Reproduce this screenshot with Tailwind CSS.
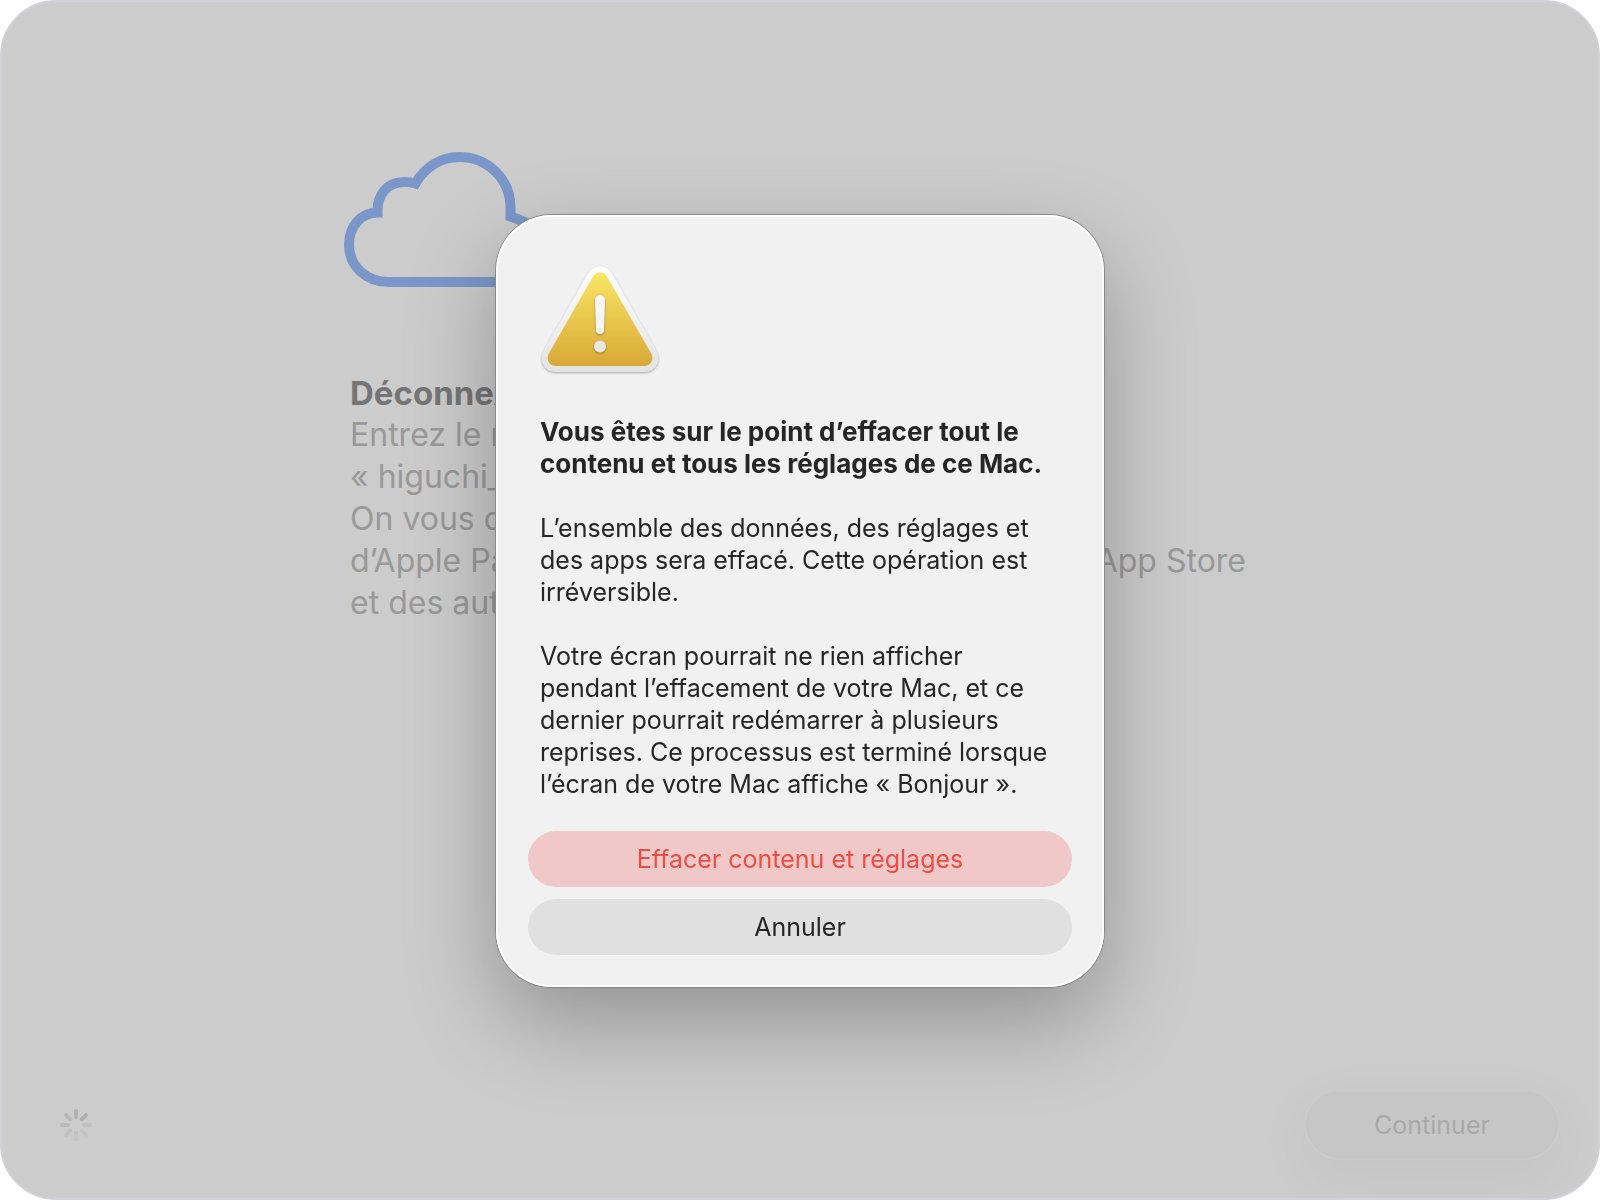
<!DOCTYPE html>
<html lang="fr">
<head>
    <meta charset="UTF-8">
    <meta name="viewport" content="width=device-width, initial-scale=1.0">
    <title>Assistant d’effacement</title>
    <script src="https://cdn.jsdelivr.net/npm/@tailwindcss/browser@4"></script>
</head>
<body class="bg-white font-['Inter',sans-serif]">
<div class="flex flex-col min-h-screen overflow-hidden rounded-[56px] border-2 border-[#d2d1d7] bg-[#cccccc]">
    <main class="grow w-full max-w-[900px] mx-auto pt-[148px]">
        <svg class="block w-[220px] h-[140px] -ml-2" viewBox="342 150 220 140" fill="none" stroke="#7b97ca"
             stroke-width="10">
            <path d="M520 282H389C366 282 349 266 349 244.500C349 226.500 361 212.500 377.500 212.500C377 194 388 182 404 182C409 182 412 182.500 415.500 183.500C425 167 441 157 459 157C488 157 510.500 179 510.500 208V216.500C530 223 549 232 549 249C549 268 536 282 520 282Z"/>
        </svg>
        <div class="pt-[82px] pr-1 text-[32px] leading-[42px] text-[#999999]">
            <h1 class="text-[33px] font-bold text-[#757575]">Déconnexion</h1>
            <p>Entrez le mot</p>
            <p>« higuchi_</p>
            <p>On vous de</p>
            <p class="flex justify-between"><span>d’Apple Pay</span><span>l’App Store</span></p>
            <p>et des autres</p>
        </div>
    </main>

    <footer class="flex items-center justify-between pl-[58px] pr-[38px] pb-[38px]">
        <svg class="w-8 h-8" viewBox="-16 -16 32 32" stroke-width="4" stroke-linecap="round">
            <path stroke="#b2b2b2" d="M0-8V-14"/>
            <path stroke="#b0b0b0" d="M5.700-5.700L9.900-9.900"/>
            <path stroke="#c0c0c0" d="M8 0H14"/>
            <path stroke="#c5c5c5" d="M5.700 5.700L9.900 9.900"/>
            <path stroke="#c2c2c2" d="M0 8V14"/>
            <path stroke="#bebebe" d="M-5.700 5.700L-9.900 9.900"/>
            <path stroke="#bababa" d="M-8 0H-14"/>
            <path stroke="#b7b7b7" d="M-5.700-5.700L-9.900-9.900"/>
        </svg>
        <button class="w-64 h-[71px] pt-0.5 rounded-full border-2 border-[#cbcbcb] bg-[#c6c6c6] text-[25px] text-[#a9a9a9] shadow-[0_16px_60px_rgb(0_0_0/0.05)]"
                disabled>Continuer
        </button>
    </footer>
</div>

<div class="fixed inset-0 flex items-center justify-center pt-0.5">
    <section role="alertdialog" aria-labelledby="alert-title"
             class="w-[608px] px-8 pt-[49px] pb-8 rounded-[56px] bg-[#f1f1f1] shadow-[0_0_0_1px_#8a8a8a,0_0_4px_rgb(0_0_0/0.1),0_36px_90px_rgb(0_0_0/0.28),inset_0_0_0_2px_#ffffff]">
        <div class="px-3 text-[25px] leading-8 text-[#262626]">
            <svg class="block w-[120px] h-[120px]" viewBox="540 264 120 120" stroke-linejoin="round">
                <defs>
                    <linearGradient id="plate" gradientUnits="userSpaceOnUse" x1="0" y1="266" x2="0" y2="372">
                        <stop offset="0" stop-color="#ffffff"/>
                        <stop offset="1" stop-color="#e3e3e3"/>
                    </linearGradient>
                    <linearGradient id="amber" gradientUnits="userSpaceOnUse" x1="0" y1="272" x2="0" y2="366">
                        <stop offset="0" stop-color="#f9e665"/>
                        <stop offset="1" stop-color="#d8a937"/>
                    </linearGradient>
                </defs>
                <g class="drop-shadow-[0_1px_1px_rgb(0_0_0/0.3)]">
                    <path d="M600 280.500L644.500 358H555.500Z" fill="url(#plate)" stroke="url(#plate)" stroke-width="28"/>
                </g>
                <path d="M600 280.500L644.500 358H555.500Z" fill="url(#amber)" stroke="url(#amber)" stroke-width="16"/>
                <g class="drop-shadow-[0_1px_1px_rgb(100_70_0/0.5)]">
                    <path fill="#f6f6f6" d="M595 300A5 5 0 0 1 605 300L604 330A4 4 0 0 1 596 330Z"/>
                    <circle fill="#e8e8e8" cx="600" cy="346.500" r="6"/>
                </g>
            </svg>
            <h2 id="alert-title" class="pt-8 text-[26px] leading-8 font-bold">Vous êtes sur le point d’effacer tout le<br>contenu et tous les réglages de ce Mac.</h2>
            <p class="pt-8">L’ensemble des données, des réglages et<br>des apps sera effacé. Cette opération est<br>irréversible.</p>
            <p class="pt-8">Votre écran pourrait ne rien afficher<br>pendant l’effacement de votre Mac, et ce<br>dernier pourrait redémarrer à plusieurs<br>reprises. Ce processus est terminé lorsque<br>l’écran de votre Mac affiche « Bonjour ».</p>
        </div>
        <div class="flex flex-col gap-3 pt-[31px] text-[25px]">
            <button class="h-14 pt-0.5 rounded-full bg-[#f0c8c8] text-[#eb4e47]">Effacer contenu et réglages</button>
            <button class="h-14 pt-0.5 rounded-full bg-[#e0e0e0] text-[#262626]">Annuler</button>
        </div>
    </section>
</div>
</body>
</html>
